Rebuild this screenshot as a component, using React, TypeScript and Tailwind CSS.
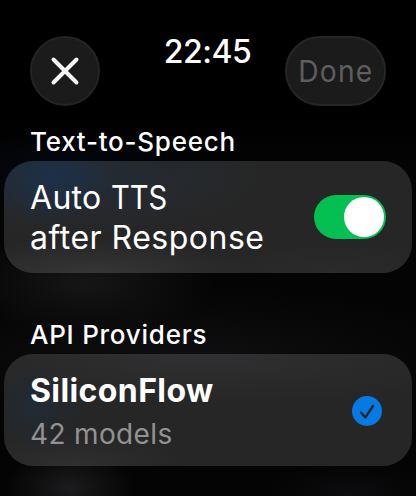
import type { ReactNode } from "react";

function SectionTitle({ children }: { children: ReactNode }) {
  return (
    <h2 className="h-8 pl-[30px] text-[26px] leading-8 font-medium tracking-[0.75px] whitespace-nowrap text-white">
      {children}
    </h2>
  );
}

export default function App() {
  return (
    <main className="h-[496px] w-[416px] overflow-hidden bg-black bg-[radial-gradient(ellipse_100px_36px_at_55px_168px,#020710_0%,transparent_100%),radial-gradient(ellipse_130px_50px_at_85px_283px,#161617_0%,transparent_100%),radial-gradient(ellipse_300px_70px_at_180px_358px,#0f0f11_0%,transparent_100%),radial-gradient(ellipse_65px_40px_at_70px_488px,#1b1b1d_0%,transparent_100%),radial-gradient(ellipse_80px_35px_at_350px_495px,#0c0c0f_0%,transparent_100%),linear-gradient(#000_110px,#040404_170px)] font-[Inter,sans-serif] text-white">
      <header className="flex h-[126px] items-start justify-between pr-[30px] pl-[30px] pt-9">
        <button
          aria-label="Close"
          className="flex size-[70px] items-center justify-center rounded-full border-2 border-[#242424] bg-[#1b1b1b]"
        >
          <svg width="30" height="30" viewBox="0 0 30 30" fill="none" stroke="#f5f5f5" strokeWidth="4" strokeLinecap="round">
            <path d="M3.5 3.5L26.5 26.5M26.5 3.5L3.5 26.5" />
          </svg>
        </button>
        <time className="-mt-[4px] ml-[30px] text-[32px] leading-10 font-medium tracking-[-0.5px]">22:45</time>
        <button className="flex h-[70px] w-[101px] items-center justify-center rounded-[35px] border-2 border-[#262626] bg-[#1b1b1b] text-[30px] tracking-[1.2px] text-[#5e5e5f]">
          <span className="inline-block scale-x-[0.94] pl-px">Done</span>
        </button>
      </header>

      <section>
        <SectionTitle>Text-to-Speech</SectionTitle>
        <div className="mx-1 mt-[3px] flex h-28 items-center justify-between rounded-[29px] bg-[#262626] bg-[radial-gradient(ellipse_60px_45px_at_48px_17px,#1d3048_0%,transparent_100%),radial-gradient(ellipse_190px_60px_at_70px_14px,#242c37_0%,transparent_100%),radial-gradient(ellipse_160px_32px_at_90px_112px,#363636_0%,transparent_100%),radial-gradient(ellipse_120px_30px_at_330px_112px,#2b2b2d_0%,transparent_100%)] pr-[26px] pl-[26px]">
          <p className="pt-px text-[32px] leading-10 tracking-[0.5px] whitespace-nowrap">
            <span className="tracking-[0.3px]">Auto </span>
            <span className="inline-block origin-left scale-x-[0.91] tracking-normal">TTS</span>
            <br />
            after Response
          </p>
          <button
            role="switch"
            aria-checked="true"
            aria-label="Auto TTS after Response"
            className="flex h-11 w-[72px] items-center justify-end rounded-full bg-[#04bf51] pr-[2px]"
          >
            <span className="size-10 rounded-full bg-white" />
          </button>
        </div>
      </section>

      <section className="mt-[46px]">
        <SectionTitle>API Providers</SectionTitle>
        <div className="mx-1 mt-[3px] flex h-28 items-center justify-between rounded-[29px] bg-[#262626] bg-[radial-gradient(ellipse_45px_40px_at_32px_52px,#212a35_0%,transparent_100%),radial-gradient(ellipse_300px_50px_at_200px_0px,#303032_0%,transparent_100%),radial-gradient(ellipse_110px_32px_at_70px_112px,#2f2f2f_0%,transparent_100%)] pr-[30px] pl-[26px]">
          <div className="pt-1 whitespace-nowrap">
            <p className="text-[32px] leading-[44px] font-[650] tracking-[0.4px]">SiliconFlow</p>
            <p className="text-[28px] leading-[42px] tracking-[0.35px] text-[#929294]">42 models</p>
          </div>
          <svg className="mt-0.5" width="30" height="30" viewBox="0 0 30 30" fill="none">
            <circle cx="15" cy="15" r="15" fill="#057ae2" />
            <path d="M9 16.5L13.4 21.4L21 10" stroke="#202327" strokeWidth="2.3" strokeLinecap="round" strokeLinejoin="round" />
          </svg>
        </div>
      </section>
    </main>
  );
}
